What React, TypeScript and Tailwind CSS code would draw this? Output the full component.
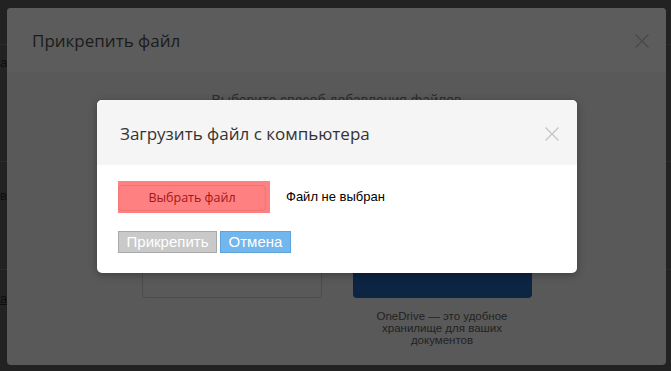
function CloseIcon({ color }: { color: string }) {
  return (
    <svg width="14" height="14" viewBox="0 0 14 14" fill="none" stroke={color} strokeWidth="1.2">
      <path d="M0.5 0.5 L13.5 13.5 M13.5 0.5 L0.5 13.5" />
    </svg>
  );
}

function PageBehind() {
  return (
    <div className="flex h-full flex-col text-[13px] text-[#0d0d0d] [font-family:'Liberation_Sans',Arial,sans-serif]">
      <div className="h-[45px] border-b border-[#2b2b2b]" />
      <div className="h-[117px] border-b border-[#2b2b2b] pt-[8px]">
        <span>ад</span>
      </div>
      <div className="h-[108px] border-b border-[#2b2b2b] pt-[24px]">
        <span>в</span>
      </div>
      <div className="pt-[19px]">
        <span className="underline">ан</span>
      </div>
    </div>
  );
}

export default function App() {
  return (
    <div className="relative h-[371px] w-[671px] overflow-hidden bg-[#222]">
      <PageBehind />

      {/* background dialog, dimmed */}
      <div className="absolute left-[7px] top-[8px] flex h-[357px] w-[659px] flex-col overflow-hidden rounded-[4px] bg-[#595959]">
        <div className="flex h-[64px] items-center justify-between bg-[#5c5c5c] pl-[25px] pr-[17px] pt-[2px]">
          <h2 className="text-[17px] text-[#1b1b1b] [font-family:'Open_Sans',sans-serif]">Прикрепить файл</h2>
          <CloseIcon color="#484848" />
        </div>
        <div className="flex flex-col items-center pt-[18px] [font-family:'Liberation_Sans',Arial,sans-serif]">
          <p className="text-[14px] leading-[20px] text-[#2c2c2c]">Выберите способ добавления файлов</p>
          <div className="mt-[8px] flex gap-[31px]">
            <div className="h-[180px] w-[180px] rounded-[4px] border border-[#4b4b4b]" />
            <div className="flex w-[179px] flex-col items-center">
              <div className="h-[180px] w-full rounded-[4px] bg-[#0c2543]" />
              <p className="mt-[12px] w-[146px] text-center text-[11.5px] leading-[12px] text-[#222]">
                OneDrive — это удобное хранилище для ваших документов
              </p>
            </div>
          </div>
        </div>
      </div>

      {/* foreground dialog */}
      <div className="absolute left-[97px] top-[100px] w-[480px] overflow-hidden rounded-[5px] bg-white shadow-[0_2px_8px_rgba(0,0,0,0.3)]">
        <div className="flex h-[65px] items-center justify-between bg-[#f5f5f5] pl-[23px] pr-[18px] pt-[2px]">
          <h3 className="text-[17px] text-[#333] [font-family:'Open_Sans',sans-serif]">Загрузить файл с компьютера</h3>
          <CloseIcon color="#c4c4c4" />
        </div>
        <div className="px-[21px] pb-[20px] pt-[16px]">
          <div className="flex items-center">
            <div className="flex h-[32px] w-[152px] items-start bg-[#ff8080] pt-[4px]">
              <button className="flex h-[26px] w-[148px] items-center justify-center rounded-[4px] border border-[#f07474] text-[12.5px] text-[#a11818] [font-family:'Open_Sans',sans-serif]">
                Выбрать файл
              </button>
            </div>
            <span className="ml-[16px] text-[13px] text-black [font-family:'Liberation_Sans',Arial,sans-serif]">Файл не выбран</span>
          </div>
          <div className="mt-[18px] flex gap-[3px] [font-family:'Liberation_Sans',Arial,sans-serif]">
            <button className="flex h-[22px] w-[99px] items-center justify-center border border-[#a9a9a9] bg-[#c9c9c9] text-[15px] text-white">
              Прикрепить
            </button>
            <button className="flex h-[22px] w-[71px] items-center justify-center border border-[#5ea3da] bg-[#71b6ec] text-[15px] text-white">
              Отмена
            </button>
          </div>
        </div>
      </div>
    </div>
  );
}
